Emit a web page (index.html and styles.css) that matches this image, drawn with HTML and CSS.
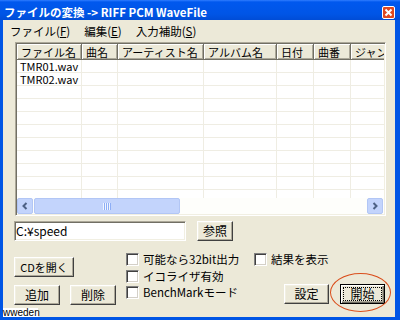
FILE: index.html
```html
<!DOCTYPE html>
<html lang="ja">
<head>
  <meta charset="UTF-8">
  <title>ファイルの変換</title>
  <link rel="stylesheet" href="styles.css">
</head>
<body>
  <div class="window">
    <div class="titlebar">
      <span class="title">ファイルの変換 -&gt; RIFF PCM WaveFile</span>
      <span class="close-btn">
        <svg width="11" height="11" viewBox="0 0 11 11"><path d="M2.5 2.5 L8.5 8.5 M8.5 2.5 L2.5 8.5" stroke="#fff" stroke-width="2"/></svg>
      </span>
    </div>

    <div class="frame">
      <div class="menubar">
        <span class="menu-item">ファイル(<u>F</u>)</span>
        <span class="menu-item">編集(<u>E</u>)</span>
        <span class="menu-item">入力補助(<u>S</u>)</span>
      </div>

      <div class="dialog">
        <!-- ファイル一覧 -->
        <div class="listview">
          <div class="lv-body">
            <table class="grid">
              <colgroup>
                <col style="width:65px"><col style="width:36px"><col style="width:86px"><col style="width:73px">
                <col style="width:37px"><col style="width:37px"><col style="width:60px">
              </colgroup>
              <thead>
                <tr><th>ファイル名</th><th>曲名</th><th>アーティスト名</th><th>アルバム名</th><th>日付</th><th>曲番</th><th>ジャンル</th></tr>
              </thead>
              <tbody>
                <tr><td>TMR01.wav</td><td></td><td></td><td></td><td></td><td></td><td></td></tr>
                <tr><td>TMR02.wav</td><td></td><td></td><td></td><td></td><td></td><td></td></tr>
                <tr><td></td><td></td><td></td><td></td><td></td><td></td><td></td></tr>
                <tr><td></td><td></td><td></td><td></td><td></td><td></td><td></td></tr>
                <tr><td></td><td></td><td></td><td></td><td></td><td></td><td></td></tr>
                <tr><td></td><td></td><td></td><td></td><td></td><td></td><td></td></tr>
                <tr><td></td><td></td><td></td><td></td><td></td><td></td><td></td></tr>
                <tr><td></td><td></td><td></td><td></td><td></td><td></td><td></td></tr>
                <tr><td></td><td></td><td></td><td></td><td></td><td></td><td></td></tr>
                <tr><td></td><td></td><td></td><td></td><td></td><td></td><td></td></tr>
                <tr><td></td><td></td><td></td><td></td><td></td><td></td><td></td></tr>
              </tbody>
            </table>
          </div>
          <div class="hscroll">
            <span class="sb-btn">
              <svg width="8" height="8" viewBox="0 0 8 8"><path d="M5.5 1 L2.5 4 L5.5 7" fill="none" stroke="#4D6185" stroke-width="2"/></svg>
            </span>
            <span class="sb-thumb"><span class="grip"></span></span>
            <span class="sb-track"></span>
            <span class="sb-btn">
              <svg width="8" height="8" viewBox="0 0 8 8"><path d="M2.5 1 L5.5 4 L2.5 7" fill="none" stroke="#4D6185" stroke-width="2"/></svg>
            </span>
          </div>
        </div>

        <div class="path-row">
          <div class="path-input">C:¥speed</div>
          <button class="btn btn-browse">参照</button>
        </div>

        <div class="lower">
          <div class="lower-left">
            <button class="btn btn-cd">CDを開く</button>
            <div class="btn-row">
              <button class="btn btn-sm">追加</button>
              <button class="btn btn-sm">削除</button>
            </div>
          </div>

          <div class="checks">
            <label class="check"><span class="box"></span>可能なら32bit出力</label>
            <label class="check"><span class="box"></span>イコライザ有効</label>
            <label class="check"><span class="box"></span>BenchMarkモード</label>
          </div>

          <div class="lower-right">
            <label class="check"><span class="box"></span>結果を表示</label>
            <div class="btn-row action-row">
              <button class="btn btn-act">設定</button>
              <button class="btn btn-act btn-default">開始</button>
            </div>
          </div>
        </div>
      </div>
    </div>

    <div class="status">wweden</div>
    <div class="mark"></div>
  </div>
</body>
</html>
```

FILE: styles.css
```css
* {
  box-sizing: border-box;
}
body {
  margin: 0;
  font-family: "Noto Sans CJK JP", "Liberation Sans", sans-serif;
  font-size: 11px;
  color: #000;
  background: #fff;
}
.window {
  position: relative;
  width: 400px;
  height: 320px;
  overflow: hidden;
  background: #0055E5;
}

/* タイトルバー */
.titlebar {
  height: 20px;
  display: flex;
  align-items: flex-start;
  background: linear-gradient(to bottom, #2F7DFF 0, #0058EE 2px, #0055E6 70%, #004CD6 100%);
  color: #fff;
}
.title {
  flex: 1;
  padding: 5px 0 0 4px;
  font-weight: bold;
  font-size: 11.5px;
  line-height: 15px;
  white-space: nowrap;
}
.close-btn {
  width: 13px;
  height: 13px;
  margin: 6px 5px 0 0;
  border: 1px solid #fff;
  border-radius: 2px;
  background: #E0481F;
  display: flex;
}

.frame {
  height: 297px;
  margin: 0 5px 0 3px;
  background: #ECE9D8;
}

/* メニュー */
.menubar {
  height: 20px;
  padding-top: 2px;
  line-height: 18px;
  font-size: 11.5px;
  display: flex;
}
.menu-item {
  padding: 0 7px;
  white-space: nowrap;
}

.dialog {
  padding: 2px 0 0 11px;
}

/* リストビュー */
.listview {
  width: 371px;
  height: 174px;
  margin-left: 1px;
  padding: 1px;
  border: 1px solid;
  border-color: #ACA899 #fff #fff #ACA899;
  box-shadow: inset 1px 1px #716F64, inset -1px -1px #F1EFE2;
  background: #fff;
  display: flex;
  flex-direction: column;
}
.lv-body {
  flex: 1;
  overflow: hidden;
}
.grid {
  width: 394px;
  table-layout: fixed;
  border-collapse: separate;
  border-spacing: 0;
}
.grid thead tr {
  height: 16px;
}
.grid th {
  padding: 0 4px;
  font-weight: normal;
  text-align: left;
  line-height: 14px;
  white-space: nowrap;
  overflow: hidden;
  background: #ECE9D8;
  border-right: 1px solid #716F64;
  border-bottom: 1px solid #716F64;
  box-shadow: inset 1px 1px #fff, inset -1px -1px #ACA899;
}
.grid tbody tr {
  height: 13px;
}
.grid td {
  padding: 0 2px 0 3px;
  font-size: 11px;
  line-height: 12px;
  white-space: nowrap;
  border-right: 1px solid #EFEDE3;
  border-bottom: 1px solid #EFEDE3;
}

/* 横スクロールバー */
.hscroll {
  height: 16px;
  display: flex;
  background: #FEFEFB;
}
.sb-btn {
  width: 16px;
  height: 16px;
  border: 1px solid #B2C6F5;
  border-radius: 2px;
  background: #C3D4FC;
  display: flex;
  align-items: center;
  justify-content: center;
}
.sb-btn:last-child {
  margin-right: 1px;
}
.sb-thumb {
  width: 146px;
  margin-left: 1px;
  border: 1px solid #B2C6F5;
  border-radius: 2px;
  background: #C3D4FC;
  display: flex;
  align-items: center;
  justify-content: center;
}
.grip {
  width: 8px;
  height: 7px;
  background: repeating-linear-gradient(to right, #F0F5FF 0 1px, #8DAEF6 1px 2px);
}
.sb-track {
  flex: 1;
}

/* パス入力 */
.path-row {
  display: flex;
  margin-top: 5px;
}
.path-input {
  width: 172px;
  height: 20px;
  padding: 0 1px;
  border: 1px solid;
  border-color: #ACA899 #fff #fff #ACA899;
  box-shadow: inset 1px 1px #716F64, inset -1px -1px #F1EFE2;
  background: #fff;
  font-size: 12px;
  line-height: 18px;
  white-space: nowrap;
}

/* ボタン */
.btn {
  height: 20px;
  padding: 0;
  font: inherit;
  font-size: 12px;
  line-height: 16px;
  color: #000;
  background: #ECE9D8;
  border: 1px solid;
  border-color: #fff #404040 #404040 #fff;
  box-shadow: inset -1px -1px #ACA899, inset 1px 1px #F1EFE2;
  white-space: nowrap;
}
.btn-browse {
  width: 36px;
  margin-left: 11px;
}
.btn-cd {
  width: 60px;
  margin-top: 4px;
  font-size: 11px;
}
.btn-sm {
  width: 46px;
}
.btn-act {
  width: 45px;
}
.btn-default {
  border-color: #000;
  box-shadow: inset 1px 1px #fff, inset -1px -1px #716F64, inset -2px -2px #ACA899;
  outline: 1px dotted #000;
  outline-offset: -4px;
}
.btn-row {
  display: flex;
  gap: 10px;
  margin-top: 8px;
}

/* 下段 */
.lower {
  display: flex;
  margin-top: 12px;
}
.lower-left {
  width: 102px;
  display: flex;
  flex-direction: column;
  align-items: flex-start;
}
.checks {
  width: 128px;
  margin-left: 10px;
}
.check {
  height: 16.5px;
  display: flex;
  align-items: flex-start;
  gap: 4px;
  font-size: 11.5px;
  line-height: 12px;
  white-space: nowrap;
}
.box {
  width: 13px;
  height: 13px;
  flex: none;
  border: 1px solid;
  border-color: #808080 #fff #fff #808080;
  box-shadow: inset 1px 1px #404040, inset -1px -1px #D4D0C8;
  background: #fff;
}
.action-row {
  margin: 14.5px 0 0 30px;
  gap: 11px;
}

/* 重なり */
.status {
  position: absolute;
  left: 3px;
  top: 308px;
  width: 35px;
  height: 9px;
  background: #fff;
  font-family: "Liberation Sans", sans-serif;
  font-size: 10px;
  line-height: 9px;
  white-space: nowrap;
}
.mark {
  position: absolute;
  left: 330px;
  top: 273px;
  width: 61px;
  height: 39px;
  border: 1px solid #DA4E1C;
  border-radius: 50%;
}
```
